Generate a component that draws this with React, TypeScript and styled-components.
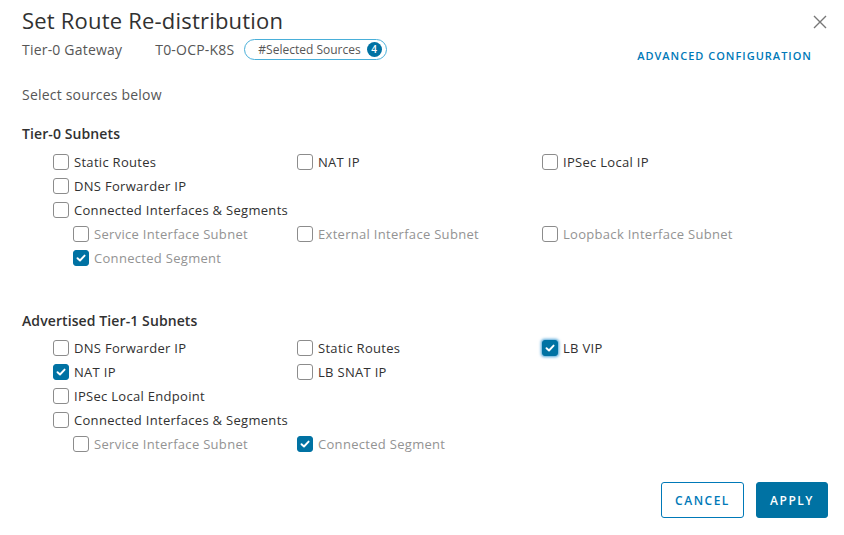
import React from "react";
import styled, { createGlobalStyle } from "styled-components";

const Global = createGlobalStyle`
  html, body { margin: 0; padding: 0; background: #fff; }
  body { font-family: "Open Sans", "Noto Sans", sans-serif; color: #313131; }
  * { box-sizing: border-box; }
`;

const Dialog = styled.div`
  width: 844px;
  height: 535px;
  padding: 6px 16px 0 22px;
  display: flex;
  flex-direction: column;
  position: relative;
`;

const Header = styled.div`
  display: flex;
  justify-content: space-between;
  align-items: flex-start;
`;

const Title = styled.h1`
  margin: 0;
  font-size: 22px;
  font-weight: 400;
  line-height: 29px;
  color: #313131;
  letter-spacing: 0.2px;
`;

const CloseBtn = styled.button`
  border: none;
  background: none;
  padding: 0;
  margin-top: 8px;
  margin-right: 0;
  width: 16px;
  height: 16px;
  display: flex;
  color: #747474;
`;

const SubRow = styled.div`
  display: flex;
  align-items: center;
  margin-top: 3px;
  height: 22px;
`;

const Meta = styled.span<{ $gap?: number }>`
  font-size: 14px;
  color: #565656;
  letter-spacing: 0.2px;
  margin-right: ${(p) => p.$gap ?? 0}px;
`;

const Badge = styled.span`
  display: inline-flex;
  align-items: center;
  height: 21px;
  border: 1px solid #49afd9;
  border-radius: 11px;
  padding: 0 4px 0 13px;
  font-size: 12px;
  color: #565656;
  gap: 6px;
`;

const Count = styled.span`
  width: 15px;
  height: 15px;
  border-radius: 50%;
  background: #0072a3;
  color: #fff;
  font-size: 10px;
  font-weight: 600;
  display: inline-flex;
  align-items: center;
  justify-content: center;
`;

const AdvLink = styled.a`
  margin-left: auto;
  margin-right: 16px;
  margin-top: 12px;
  font-size: 11px;
  font-weight: 600;
  letter-spacing: 1px;
  color: #0079b8;
  text-decoration: none;
`;

const Lead = styled.div`
  font-size: 14px;
  color: #565656;
  margin-top: 26px;
  line-height: 18px;
  letter-spacing: 0.2px;
`;

const SectionTitle = styled.div<{ $top: number }>`
  font-size: 14px;
  font-weight: 600;
  color: #313131;
  margin-top: ${(p) => p.$top}px;
  line-height: 18px;
  letter-spacing: 0.1px;
`;

const Grid = styled.div<{ $top: number }>`
  display: grid;
  grid-template-columns: 244px 245px 1fr;
  grid-auto-rows: 24px;
  margin-top: ${(p) => p.$top}px;
  margin-left: 31px;
`;

const Item = styled.label<{ $indent?: boolean; $muted?: boolean; $col?: number }>`
  display: flex;
  align-items: center;
  gap: 5px;
  padding-left: ${(p) => (p.$indent ? 20 : 0)}px;
  font-size: 13px;
  letter-spacing: 0.3px;
  color: ${(p) => (p.$muted ? "#939393" : "#313131")};
  grid-column: ${(p) => p.$col ?? "auto"};
`;

const Box = styled.span<{ $checked?: boolean; $focus?: boolean }>`
  width: 16px;
  height: 16px;
  border-radius: 3px;
  flex: none;
  border: 1px solid ${(p) => (p.$checked ? "#0072a3" : "#8c8c8c")};
  background: ${(p) => (p.$checked ? "#0072a3" : "#fff")};
  display: inline-flex;
  align-items: center;
  justify-content: center;
  box-shadow: ${(p) => (p.$focus ? "0 0 3px 1px #4ea3d6" : "none")};
`;

const Footer = styled.div`
  display: flex;
  justify-content: flex-end;
  gap: 12px;
  margin-top: auto;
  margin-bottom: 17px;
  margin-right: 0;
`;

const Button = styled.button<{ $primary?: boolean }>`
  height: 36px;
  padding: 0;
  border-radius: 3px;
  border: 1px solid ${(p) => (p.$primary ? "#0072a3" : "#0079b8")};
  background: ${(p) => (p.$primary ? "#0072a3" : "#fff")};
  color: ${(p) => (p.$primary ? "#fff" : "#0079b8")};
  font-family: inherit;
  font-size: 12px;
  font-weight: 600;
  letter-spacing: 1.5px;
  width: ${(p) => (p.$primary ? 72 : 83)}px;
`;

const Check = () => (
  <svg width="10" height="8" viewBox="0 0 10 8">
    <path d="M1.5 4.2 L4 6.5 L8.6 1.6" fill="none" stroke="#fff" strokeWidth="1.9" strokeLinecap="round" strokeLinejoin="round" />
  </svg>
);

type Opt = { label: string; checked?: boolean; indent?: boolean; muted?: boolean; col?: number; focus?: boolean };

const CheckItem = ({ o }: { o: Opt }) => (
  <Item $indent={o.indent} $muted={o.muted} $col={o.col}>
    <Box $checked={o.checked} $focus={o.focus}>{o.checked && <Check />}</Box>
    {o.label}
  </Item>
);

const tier0: Opt[] = [
  { label: "Static Routes" },
  { label: "NAT IP" },
  { label: "IPSec Local IP" },
  { label: "DNS Forwarder IP", col: 1 },
  { label: "Connected Interfaces & Segments", col: 1 },
  { label: "Service Interface Subnet", indent: true, muted: true, col: 1 },
  { label: "External Interface Subnet", muted: true },
  { label: "Loopback Interface Subnet", muted: true },
  { label: "Connected Segment", indent: true, muted: true, checked: true, col: 1 },
];

const tier1: Opt[] = [
  { label: "DNS Forwarder IP" },
  { label: "Static Routes" },
  { label: "LB VIP", checked: true, focus: true },
  { label: "NAT IP", checked: true, col: 1 },
  { label: "LB SNAT IP" },
  { label: "IPSec Local Endpoint", col: 1 },
  { label: "Connected Interfaces & Segments", col: 1 },
  { label: "Service Interface Subnet", indent: true, muted: true, col: 1 },
  { label: "Connected Segment", muted: true, checked: true },
];

export default function App() {
  return (
    <>
      <Global />
      <Dialog>
        <Header>
          <Title>Set Route Re-distribution</Title>
          <CloseBtn aria-label="close">
            <svg width="16" height="16" viewBox="0 0 16 16">
              <path d="M2 2 L14 14 M14 2 L2 14" stroke="#777" strokeWidth="1.4" fill="none" />
            </svg>
          </CloseBtn>
        </Header>
        <SubRow>
          <Meta $gap={33}>Tier-0 Gateway</Meta>
          <Meta $gap={10}>T0-OCP-K8S</Meta>
          <Badge>
            #Selected Sources<Count>4</Count>
          </Badge>
          <AdvLink href="#">ADVANCED CONFIGURATION</AdvLink>
        </SubRow>
        <Lead>Select sources below</Lead>
        <SectionTitle $top={21}>Tier-0 Subnets</SectionTitle>
        <Grid $top={7}>
          {tier0.map((o, i) => (
            <CheckItem key={i} o={o} />
          ))}
        </Grid>
        <SectionTitle $top={42}>Advertised Tier-1 Subnets</SectionTitle>
        <Grid $top={6}>
          {tier1.map((o, i) => (
            <CheckItem key={i} o={o} />
          ))}
        </Grid>
        <Footer>
          <Button>CANCEL</Button>
          <Button $primary>APPLY</Button>
        </Footer>
      </Dialog>
    </>
  );
}
